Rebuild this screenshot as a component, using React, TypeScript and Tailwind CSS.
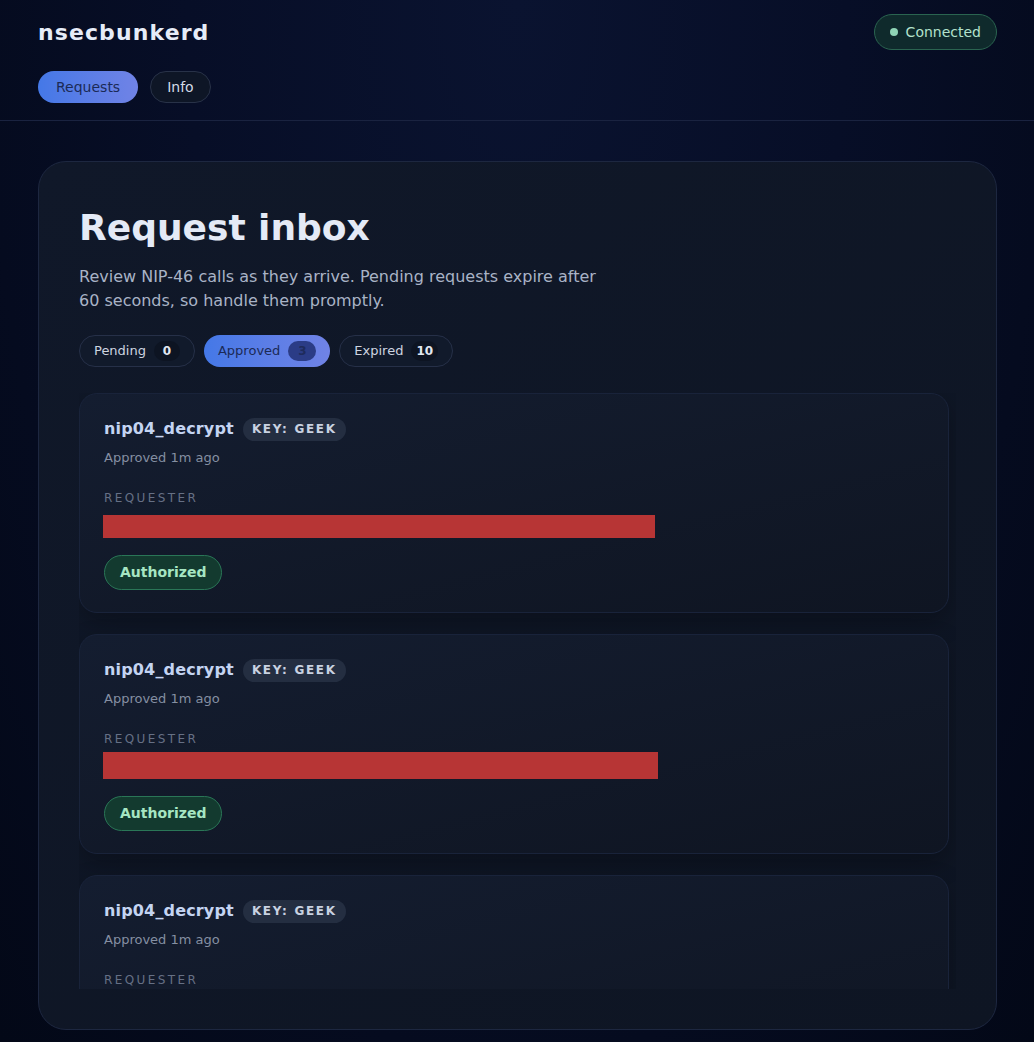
const requests = [
  { method: 'nip04_decrypt', keyName: 'geek', age: '1m ago', bar: 'mt-[8px] h-[23px] w-[552px]' },
  { method: 'nip04_decrypt', keyName: 'geek', age: '1m ago', bar: 'mt-[4px] h-[27px] w-[555px]' },
  { method: 'nip04_decrypt', keyName: 'geek', age: '1m ago', bar: 'mt-[8px] h-[23px] w-[552px]' },
];

const filters = [
  { label: 'Pending', count: 0 },
  { label: 'Approved', count: 3, active: true },
  { label: 'Expired', count: 10 },
];

function RequestCard({ method, keyName, age, bar }: { method: string; keyName: string; age: string; bar: string }) {
  return (
    <div className="shrink-0 h-[220px] rounded-[18px] border border-[#19233a] bg-gradient-to-br from-[#141d30] to-[#0f1522] px-[24px] pt-[23px] pb-[24px] shadow-[0_10px_24px_rgba(0,0,0,0.25)]">
      <div className="flex items-center gap-[9px]">
        <span className="text-[16px] font-bold tracking-[0.01em] text-[#c4d4f2]">{method}</span>
        <span className="h-[23px] flex items-center rounded-full bg-[#242e41] px-[9px] text-[12px] font-bold uppercase tracking-[0.14em] text-[#c9d2e1]">
          Key: {keyName}
        </span>
      </div>
      <div className="mt-[7px] text-[13px] leading-[20px] text-[#858fa2]">Approved {age}</div>
      <div className="mt-[21px] text-[12px] leading-[18px] uppercase tracking-[0.2em] text-[#667085]">Requester</div>
      <div className={`${bar} -ml-px bg-[#b73535]`} />
      <div className="mt-[17px] inline-flex h-[35px] items-center rounded-full border border-[#2a7657] bg-[#133a2f] px-[15px] text-[14px] font-bold text-[#a6e6c3]">
        Authorized
      </div>
    </div>
  );
}

export default function App() {
  return (
    <div className="min-h-[1042px] bg-[radial-gradient(ellipse_at_top,#0a1330_0%,#070e27_45%,#030817_100%)] font-['DejaVu_Sans',sans-serif] text-[#e3e9f5]">
      {/* header */}
      <header className="border-b border-[#1a2340] pl-[38px] pr-[37px] pt-[14px] pb-[17px]">
        <div className="flex items-center justify-between">
          <h1 className="text-[22px] font-bold tracking-[0.05em] text-[#e6ecf8]">nsecbunkerd</h1>
          <div className="flex h-[36px] items-center gap-[8px] rounded-full border border-[#2a6450] bg-[#0f2a2c] pl-[15px] pr-[15px] text-[14px] text-[#b3e2cd]">
            <span className="h-[8px] w-[8px] rounded-full bg-[#8fd4b6]" />
            Connected
          </div>
        </div>
        <nav className="mt-[21px] flex gap-[12px]">
          <button className="h-[32px] rounded-full bg-gradient-to-r from-[#4478e7] to-[#7083e6] px-[18px] text-[14px] text-[#1b2a56]">
            Requests
          </button>
          <button className="h-[32px] rounded-full border border-[#283248] bg-[#0e1626] px-[16px] text-[14px] text-[#d4dbe7]">
            Info
          </button>
        </nav>
      </header>

      <main className="pl-[38px] pr-[37px] pt-[40px] pb-[12px]">
        <section className="flex h-[869px] flex-col rounded-[28px] border border-[#1d2740] bg-gradient-to-br from-[#101829] to-[#0e1523] px-[40px] pt-[44px] pb-[40px]">
          <h2 className="text-[36px] font-bold leading-[43px] text-[#e4eaf6]">Request inbox</h2>
          <p className="mt-[16px] max-w-[540px] text-[16px] leading-[24px] text-[#a9b3c6]">
            Review NIP-46 calls as they arrive. Pending requests expire after 60 seconds, so handle them promptly.
          </p>

          <div className="mt-[22px] flex gap-[9px]">
            {filters.map((f) => (
              <button
                key={f.label}
                className={
                  f.active
                    ? 'flex h-[32px] items-center gap-[8px] rounded-full bg-gradient-to-r from-[#4478e7] to-[#7083e6] px-[14px] text-[13px] text-[#1b2a56]'
                    : 'flex h-[32px] items-center gap-[8px] rounded-full border border-[#263048] bg-[#111a2b] px-[14px] text-[13px] text-[#cdd4e0]'
                }
              >
                {f.label}
                <span
                  className={
                    f.active
                      ? 'flex h-[20px] min-w-[28px] items-center justify-center rounded-full bg-[#2b3c86] px-[6px] text-[12px] font-bold text-[#1e2b5c]'
                      : 'flex h-[20px] min-w-[26px] items-center justify-center rounded-full bg-[#0d1422] px-[5px] text-[12px] font-bold text-[#e1e7f1]'
                  }
                >
                  {f.count}
                </span>
              </button>
            ))}
          </div>

          <div className="mt-[26px] flex min-h-0 flex-1 flex-col gap-[21px] overflow-hidden pr-[7px]">
            {requests.map((r, i) => (
              <RequestCard key={i} {...r} />
            ))}
          </div>
        </section>
      </main>
    </div>
  );
}
